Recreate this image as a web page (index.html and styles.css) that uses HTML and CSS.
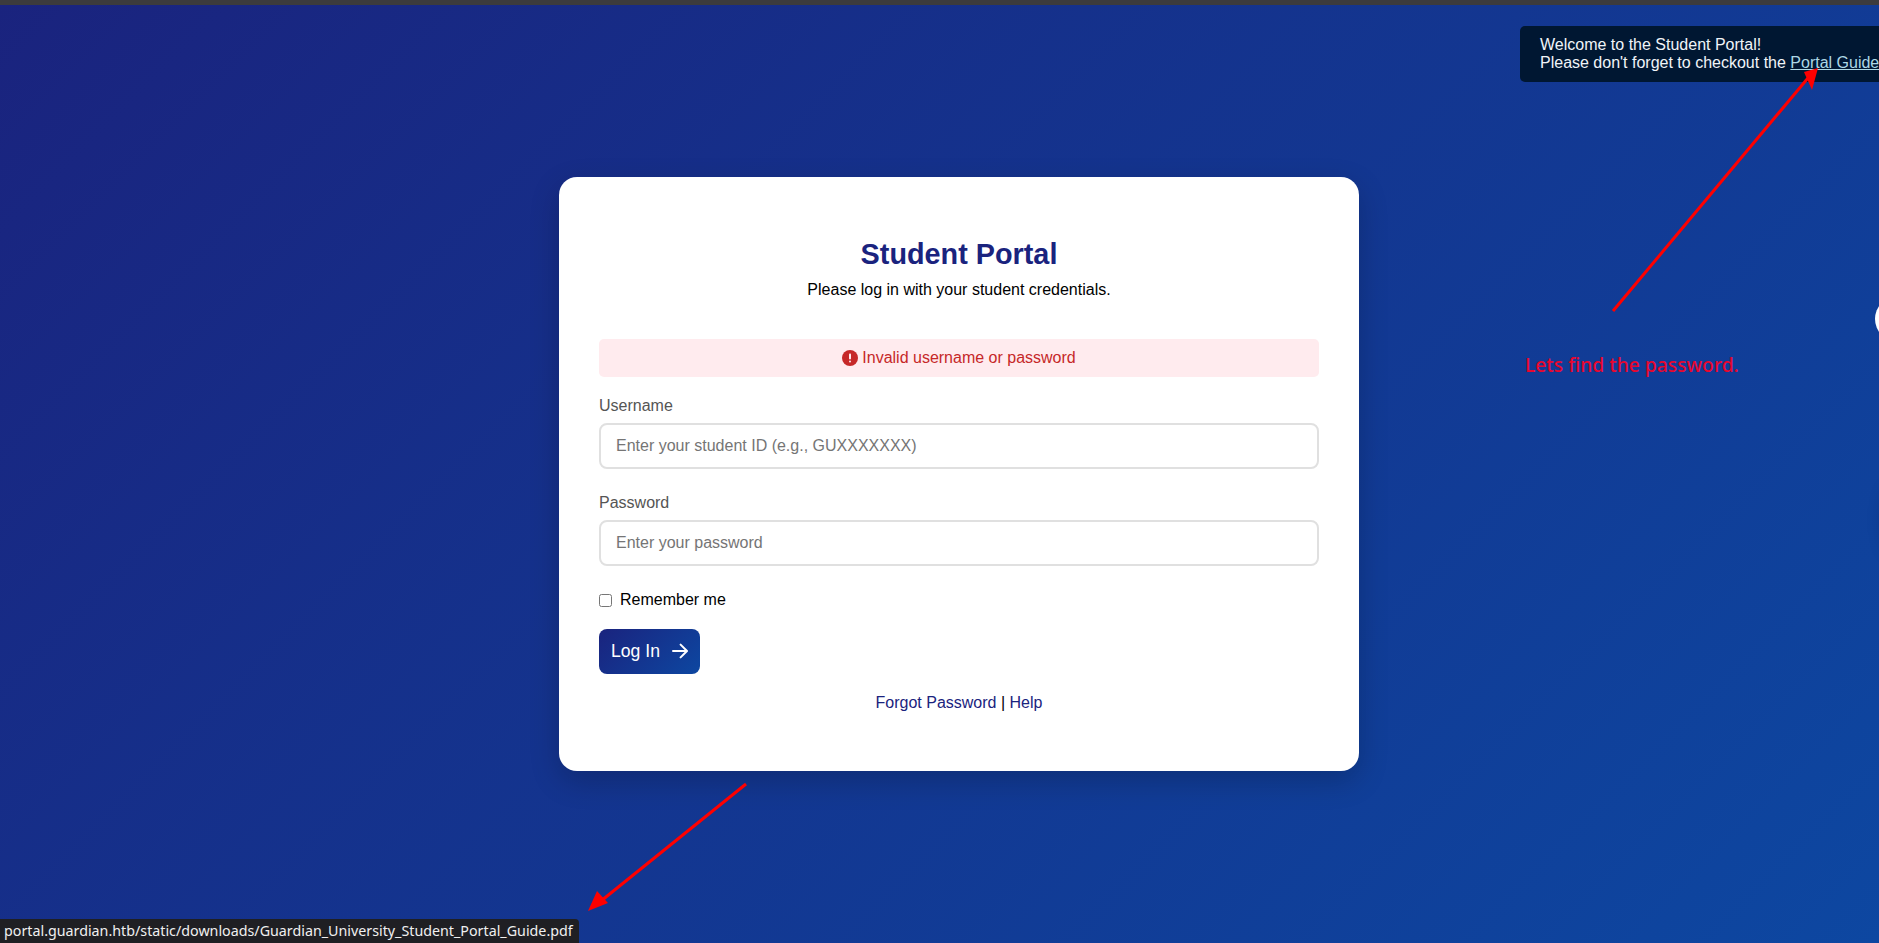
FILE: index.html
```html
<!DOCTYPE html>
<html lang="en">
<head>
    <meta charset="UTF-8">
    <meta name="viewport" content="width=device-width, initial-scale=1.0">
    <title>Student Portal</title>
    <link rel="stylesheet" href="styles.css">
</head>
<body>
    <div class="top-strip"></div>

    <main class="page">
        <div class="login-card">
            <h1>Student Portal</h1>
            <p class="subtitle">Please log in with your student credentials.</p>

            <div class="error-box">
                <svg class="error-icon" viewBox="0 0 16 16" width="16" height="16">
                    <circle cx="8" cy="8" r="8" fill="#c62828"/>
                    <rect x="7" y="3.4" width="2" height="6" rx="0.8" fill="#ffebee"/>
                    <rect x="7" y="10.6" width="2" height="2" rx="1" fill="#ffebee"/>
                </svg>
                Invalid username or password
            </div>

            <div class="field">
                <label for="username">Username</label>
                <input id="username" type="text" placeholder="Enter your student ID (e.g., GUXXXXXXX)">
            </div>
            <div class="field">
                <label for="password">Password</label>
                <input id="password" type="password" placeholder="Enter your password">
            </div>

            <label class="remember"><input type="checkbox"> Remember me</label>

            <button class="login-btn" type="button">
                Log In
                <svg class="btn-arrow" viewBox="0 0 16 16" width="16" height="16" fill="none" stroke="#fff" stroke-width="2" stroke-linecap="round" stroke-linejoin="round">
                    <path d="M1 8h13.6M8.6 1.6 15 8l-6.4 6.4"/>
                </svg>
            </button>

            <p class="links"><a href="#">Forgot Password</a> | <a href="#">Help</a></p>
        </div>
    </main>

    <div class="toast">
        Welcome to the Student Portal!<br>
        Please don't forget to checkout the <a href="#">Portal Guide</a>
    </div>

    <div class="edge-circle"></div>
    <div class="edge-shadow"></div>

    <svg class="marks" width="1879" height="943" viewBox="0 0 1879 943">
        <path d="M1613 311 1808 78" stroke="#f00" stroke-width="3" fill="none"/>
        <path d="M1818 68 1804 72 1812 90Z" fill="#f00"/>
        <path d="M746 784 601 901" stroke="#f00" stroke-width="3" fill="none"/>
        <path d="M588 911 597 891 608 903Z" fill="#f00"/>
    </svg>
    <div class="note">Lets find the password.</div>

    <div class="status-bar">portal.guardian.htb/static/downloads/Guardian_University_Student_Portal_Guide.pdf</div>
</body>
</html>
```

FILE: styles.css
```css
* {
    box-sizing: border-box;
}
html {
    overflow: hidden;
}
body {
    margin: 0;
    width: 1918px;
    height: 943px;
    overflow: hidden;
    font-family: 'Liberation Sans', Arial, sans-serif;
    font-size: 16px;
    display: flex;
    flex-direction: column;
    background: linear-gradient(135deg, #1a237e, #0d47a1);
}
.top-strip {
    height: 5px;
    background: #3c3b3d;
}
.page {
    flex: 1;
    display: flex;
    align-items: center;
    justify-content: center;
}
.login-card {
    width: 800px;
    height: 594px;
    padding: 40px;
    background: #fff;
    border-radius: 18px;
    box-shadow: 0 10px 30px rgba(0, 0, 0, 0.2);
}
h1 {
    margin: 21px 0 10px;
    font-size: 28.8px;
    text-align: center;
    color: #1a237e;
}
.subtitle {
    margin: 0 0 40px;
    text-align: center;
    color: #000;
}
.error-box {
    height: 38px;
    margin-bottom: 20px;
    display: flex;
    align-items: center;
    justify-content: center;
    gap: 4px;
    background: #ffebee;
    color: #c62828;
    border-radius: 5px;
}
.field {
    margin-bottom: 25px;
}
.field label {
    display: block;
    margin-bottom: 8px;
    color: #555;
}
.field input {
    display: block;
    width: 100%;
    height: 46px;
    padding: 0 15px;
    border: 2px solid #e0e0e0;
    border-radius: 8px;
    font-family: inherit;
    font-size: 16px;
}
.field input::placeholder {
    color: #757575;
}
.remember {
    display: flex;
    align-items: center;
    gap: 8px;
    height: 18px;
    margin-top: 25px;
    color: #000;
}
.remember input {
    width: 13px;
    height: 13px;
    margin: 0;
}
.login-btn {
    display: flex;
    align-items: center;
    gap: 12px;
    height: 45px;
    margin-top: 20px;
    padding: 0 12px;
    border: none;
    border-radius: 8px;
    font-family: inherit;
    font-size: 17.6px;
    color: #fff;
    background: linear-gradient(135deg, #1a237e, #0d47a1);
}
.btn-arrow {
    margin-top: -2px;
}
.links {
    margin: 20px 0 0;
    text-align: center;
    color: #000;
}
.links a {
    color: #1a237e;
    text-decoration: none;
}
.toast {
    position: absolute;
    top: 26px;
    left: 1520px;
    width: 359px;
    height: 56px;
    padding: 10px 0 0 20px;
    background: #001732;
    border-radius: 5px 0 0 5px;
    color: #f0f4f8;
    line-height: 18px;
    white-space: nowrap;
    overflow: hidden;
}
.toast a {
    color: #add8e6;
}
.edge-circle {
    position: absolute;
    top: 296px;
    left: 1875px;
    width: 46px;
    height: 46px;
    border-radius: 50%;
    background: #fff;
}
.edge-shadow {
    position: absolute;
    top: 490px;
    left: 1892px;
    width: 30px;
    height: 60px;
    border-radius: 15px;
    box-shadow: 0 0 22px rgba(0, 0, 0, 0.45);
}
.marks {
    position: absolute;
    top: 0;
    left: 0;
}
.note {
    position: absolute;
    top: 351px;
    left: 1525px;
    font-family: 'Noto Sans', sans-serif;
    font-size: 19.3px;
    font-weight: 500;
    color: #e8072f;
}
.status-bar {
    position: absolute;
    left: 0;
    bottom: 0;
    height: 24px;
    padding: 0 6px 0 4px;
    background: #1f1f23;
    border-top-right-radius: 4px;
    color: #f0f0f0;
    font-family: 'Noto Sans', sans-serif;
    font-size: 14.27px;
    line-height: 24px;
    white-space: nowrap;
}
```
